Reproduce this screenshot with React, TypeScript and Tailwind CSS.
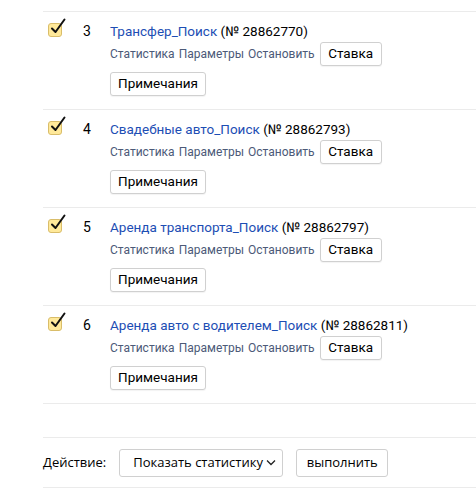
import React from "react";

type Campaign = {
  num: number;
  name: string;
  id: string;
};

const campaigns: Campaign[] = [
  { num: 3, name: "Трансфер_Поиск", id: "28862770" },
  { num: 4, name: "Свадебные авто_Поиск", id: "28862793" },
  { num: 5, name: "Аренда транспорта_Поиск", id: "28862797" },
  { num: 6, name: "Аренда авто с водителем_Поиск", id: "28862811" },
];

function CheckBox() {
  return (
    <div className="relative w-[14px] h-[14px] rounded-[3px] border border-[#d9bd6a] bg-[#ffe99a]">
      <svg
        className="absolute left-[1px] top-[-6px]"
        width="17"
        height="17"
        viewBox="0 0 17 17"
        fill="none"
      >
        <path d="M2 10.5 L5.5 14 L14.5 1.5" stroke="#111" strokeWidth="2" strokeLinecap="round" strokeLinejoin="round" />
      </svg>
    </div>
  );
}

function SmallButton({ w, children }: { w: string; children: React.ReactNode }) {
  return (
    <button className={`${w} h-[24px] rounded-[3px] border border-[#d0d0d0] bg-white text-[13.5px] text-black leading-none shadow-[0_1px_1px_rgba(0,0,0,0.05)]`}>
      {children}
    </button>
  );
}

function Row({ c }: { c: Campaign }) {
  return (
    <div className="flex h-[98px] border-t border-[#ebebeb] font-['Roboto',Arial,sans-serif]">
      <div className="w-[40px] pl-[5px] pt-[11px]">
        <CheckBox />
      </div>
      <div className="w-[27px] h-[30px] pt-[8px] text-[14px] leading-[22px] text-black">{c.num}</div>
      <div className="flex flex-col pt-[8px]">
        <div className="h-[22px] text-[13.5px] leading-[22px] whitespace-nowrap">
          <span className="text-[#1d4eb4]">{c.name}</span>{" "}
          <span className="text-black">(№ {c.id})</span>
        </div>
        <div className="flex items-center h-[24px] text-[12px] text-[#4c5a78]">
          <span>Статистика</span>
          <span className="ml-[4px]">Параметры</span>
          <span className="ml-[4px] mr-[5px]">Остановить</span>
          <SmallButton w="w-[62px]">Ставка</SmallButton>
        </div>
        <div className="flex mt-[6px]">
          <SmallButton w="w-[96px]">Примечания</SmallButton>
        </div>
      </div>
    </div>
  );
}

export default function App() {
  return (
    <div className="w-[476px] h-[490px] bg-white overflow-hidden font-['Open_Sans',Arial,sans-serif]">
      <div className="ml-[43px] pt-[11px]">
        {campaigns.map((c) => (
          <Row key={c.num} c={c} />
        ))}
        <div className="h-[34px] border-t border-[#ebebeb]" />
        <div className="flex items-center h-[51px] border-t border-b border-[#ebebeb]">
          <span className="text-[13px] text-black mr-[13px]">Действие:</span>
          <button className="flex items-center h-[28px] w-[164px] pl-[13px] rounded-[3px] border border-[#d0d0d0] bg-white text-[13px] text-black">
            Показать статистику
            <svg className="ml-[3px]" width="10" height="7" viewBox="0 0 10 7" fill="none">
              <path d="M1 1.5 L5 5.5 L9 1.5" stroke="#222" strokeWidth="1.3" />
            </svg>
          </button>
          <button className="ml-[13px] h-[28px] w-[92px] rounded-[3px] border border-[#d0d0d0] bg-white text-[13px] text-black">
            выполнить
          </button>
        </div>
      </div>
    </div>
  );
}
